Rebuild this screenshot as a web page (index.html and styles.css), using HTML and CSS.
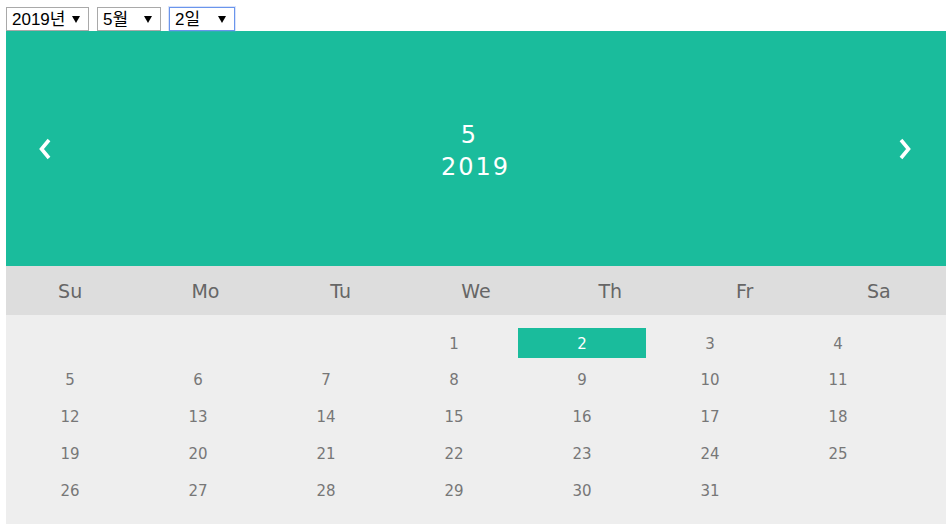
FILE: index.html
```html
<!DOCTYPE html>
<html lang="ko">
<head>
<meta charset="utf-8">
<title>Calendar</title>
<link rel="stylesheet" href="styles.css">
</head>
<body>
<div class="pickers">
  <label class="pick pick-year">
    <select><option>2019년</option></select>
    <svg class="caret" width="8" height="7" viewBox="0 0 8 7"><path d="M0 0H8L4 7Z"/></svg>
  </label>
  <label class="pick pick-month">
    <select><option>5월</option></select>
    <svg class="caret" width="8" height="7" viewBox="0 0 8 7"><path d="M0 0H8L4 7Z"/></svg>
  </label>
  <label class="pick pick-day focused">
    <select><option>2일</option></select>
    <svg class="caret" width="8" height="7" viewBox="0 0 8 7"><path d="M0 0H8L4 7Z"/></svg>
  </label>
</div>
<div class="calendar">
  <div class="cal-head">
    <span class="nav"><svg width="14" height="22" viewBox="0 0 14 22"><polyline points="11,2 3.5,11 11,20" fill="none" stroke="#fff" stroke-width="3.6"/></svg></span>
    <div class="title">
      <div class="month">5</div>
      <div class="year">2019</div>
    </div>
    <span class="nav"><svg width="14" height="22" viewBox="0 0 14 22"><polyline points="3,2 10.5,11 3,20" fill="none" stroke="#fff" stroke-width="3.6"/></svg></span>
  </div>
  <div class="weekdays">
    <span>Su</span><span>Mo</span><span>Tu</span><span>We</span><span>Th</span><span>Fr</span><span>Sa</span>
  </div>
  <div class="days">
    <span></span><span></span><span></span><span>1</span><span class="active">2</span><span>3</span><span>4</span>
    <span>5</span><span>6</span><span>7</span><span>8</span><span>9</span><span>10</span><span>11</span>
    <span>12</span><span>13</span><span>14</span><span>15</span><span>16</span><span>17</span><span>18</span>
    <span>19</span><span>20</span><span>21</span><span>22</span><span>23</span><span>24</span><span>25</span>
    <span>26</span><span>27</span><span>28</span><span>29</span><span>30</span><span>31</span><span></span>
  </div>
</div>
</body>
</html>
```

FILE: styles.css
```css
html, body {
  margin: 0;
  padding: 0;
  background: #fff;
}
body {
  padding: 7px 5px 0 6px;
  font-family: "DejaVu Sans", Verdana, sans-serif;
}
.pickers {
  display: flex;
  gap: 8px;
  height: 24px;
}
.pick {
  box-sizing: border-box;
  display: flex;
  align-items: center;
  height: 24px;
  border: 1px solid #a9a9a9;
  background: #fff;
  padding: 0 8px 0 5px;
}
.pick.focused {
  border-color: #6a95ec;
  box-shadow: 0 0 0 1px rgba(106,149,236,0.25);
}
.pick select {
  appearance: none;
  -webkit-appearance: none;
  border: 0;
  outline: none;
  background: transparent;
  padding: 0;
  margin: 0;
  font-family: "Liberation Sans", Arial, "Noto Sans CJK KR", sans-serif;
  font-size: 17px;
  color: #000;
  flex: 1;
  min-width: 0;
}
.caret { fill: #000; flex: none; }
.pick-year { width: 83px; }
.pick-month { width: 64px; }
.pick-day { width: 66px; }

.calendar {
  width: 940px;
}
.cal-head {
  height: 235px;
  background: #1abc9c;
  display: flex;
  align-items: center;
  padding: 0 34px 0 32px;
  color: #fff;
}
.nav {
  display: flex;
  width: 14px;
  height: 22px;
  flex: none;
}
.title {
  flex: 1;
  text-align: center;
  font-size: 24px;
  line-height: 32px;
  letter-spacing: 2px;
  padding-top: 4px;
  padding-left: 1px;
}
.month {
  padding-right: 12px;
}
.weekdays {
  display: grid;
  grid-template-columns: repeat(7, 1fr);
  height: 49px;
  align-items: center;
  background: #dddddd;
  color: #666;
  font-size: 19px;
  text-align: center;
}
.weekdays span:first-child { padding-right: 6px; }
.weekdays span:nth-child(2) { padding-right: 4px; }
.weekdays span:nth-child(3) { padding-right: 2px; }
.days {
  display: grid;
  grid-template-columns: repeat(7, 128px);
  grid-auto-rows: 30px;
  row-gap: 6.75px;
  padding: 13px 0 19px;
  background: #eeeeee;
  color: #777;
  font-size: 15px;
}
.days span {
  display: flex;
  align-items: center;
  justify-content: center;
  padding-top: 1px;
}
.days .active {
  background: #1abc9c;
  color: #fff;
}
```
